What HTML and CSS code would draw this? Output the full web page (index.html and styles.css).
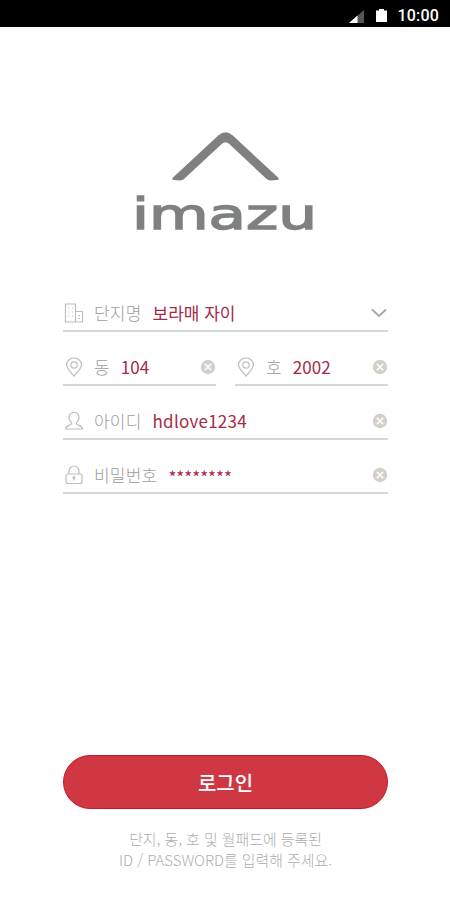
FILE: index.html
```html
<!DOCTYPE html>
<html lang="ko">
<head>
  <meta charset="UTF-8">
  <meta name="viewport" content="width=device-width, initial-scale=1.0">
  <title>imazu</title>
  <link rel="stylesheet" href="styles.css">
</head>
<body>
  <!-- shared icons -->
  <svg class="defs" width="0" height="0">
    <symbol id="icon-pin" viewBox="0 0 20 20">
      <path d="M10 19C7 15.5 2.500 11.500 2.500 7.800a7.500 6.800 0 0 1 15 0C17.500 11.500 13 15.500 10 19z"/>
      <circle cx="10" cy="8" r="3.200"/>
    </symbol>
    <symbol id="icon-clear" viewBox="0 0 16 16">
      <circle cx="8" cy="8" r="7.200" fill="#d3d0ca"/>
      <path d="M4.800 4.800l6.400 6.400M11.200 4.800l-6.400 6.400" fill="none" stroke="#fff" stroke-width="1.500"/>
    </symbol>
  </svg>

  <header class="status-bar">
    <svg class="signal" width="16" height="14" viewBox="0 0 16 14">
      <path d="M0 14L15 1v13z" fill="#555"/>
      <path d="M0 14L8.500 6.500V14z" fill="#fff"/>
    </svg>
    <svg class="battery" width="11" height="13" viewBox="0 0 11 13">
      <path d="M0 1.500h3V0h5v1.500h3V13H0z" fill="#fff"/>
    </svg>
    <span class="time">10:00</span>
  </header>

  <main class="login">
    <svg class="logo" width="182" height="102" viewBox="0 0 182 102">
      <path d="M38.500 48L45 48.500Q47.500 48.500 49.500 46.500L87 11.800Q90.500 8.500 94 11.800L131 46.500Q133 48.500 135.500 48.500L142.500 48Q144.500 47.500 143 45.500L97.500 3.200Q90.500-2.800 83.500 3.200L38 45.500Q36.500 47.500 38.500 48z" fill="#7f8180"/>
      <text class="logo-text" x="-3" y="97" textLength="185" lengthAdjust="spacingAndGlyphs">imazu</text>
    </svg>

    <form class="fields">
      <div class="field">
        <svg class="icon" viewBox="0 0 20 20">
          <path d="M1.500 19V1h10v18zM11.500 8.500h7V19h-7M4.500 5h1M8 5h1M4.500 9h1M8 9h1M4.500 13h1M8 13h1M14.500 12.500h1.500M14.500 15.500h1.500"/>
        </svg>
        <span class="label">단지명</span>
        <span class="value">보라매 자이</span>
        <svg class="arrow" width="16" height="10" viewBox="0 0 16 10"><path d="M1 1.500l7 6.500 7-6.500"/></svg>
      </div>

      <div class="field-row">
        <div class="field">
          <svg class="icon"><use href="#icon-pin"/></svg>
          <span class="label">동</span>
          <span class="value">104</span>
          <svg class="clear"><use href="#icon-clear"/></svg>
        </div>
        <div class="field">
          <svg class="icon"><use href="#icon-pin"/></svg>
          <span class="label">호</span>
          <span class="value">2002</span>
          <svg class="clear"><use href="#icon-clear"/></svg>
        </div>
      </div>

      <div class="field">
        <svg class="icon" viewBox="0 0 20 20">
          <path d="M7.500 11.500C3.500 8 4.500 1.500 10 1.500s6.500 6.500 2.500 10v1.500c1 1.500 5.500 1 6 5H1.500c.5-4 5-3.500 6-5z"/>
        </svg>
        <span class="label">아이디</span>
        <span class="value user-id">hdlove1234</span>
        <svg class="clear"><use href="#icon-clear"/></svg>
      </div>

      <div class="field">
        <svg class="icon" viewBox="0 0 20 20">
          <path d="M5 9V6a5 5 0 0 1 10 0v3M4 9h12q2 0 2 2v5.500q0 2-2 2H4q-2 0-2-2V11q0-2 2-2zM10 12.500v3"/>
          <circle cx="10" cy="12.500" r="1"/>
        </svg>
        <span class="label">비밀번호</span>
        <span class="value password">********</span>
        <svg class="clear"><use href="#icon-clear"/></svg>
      </div>
    </form>

    <button class="login-btn" type="button">로그인</button>
    <p class="notice">단지, 동, 호 및 월패드에 등록된<br>ID / PASSWORD를 입력해 주세요.</p>
  </main>
</body>
</html>
```
FILE: styles.css
```css
* {
  box-sizing: border-box;
}

body {
  margin: 0;
  height: 900px;
  display: flex;
  flex-direction: column;
  background: #fff;
  font-family: "Noto Sans CJK KR", "Noto Sans", sans-serif;
}

.defs {
  display: none;
}

.status-bar {
  height: 27px;
  flex-shrink: 0;
  display: flex;
  align-items: center;
  justify-content: flex-end;
  padding: 4px 11px 0 0;
  background: #000;
  color: #fff;
}

.battery {
  margin: 0 10px 0 11px;
}

.time {
  font-family: Roboto, sans-serif;
  font-size: 16px;
  font-weight: 500;
  line-height: 20px;
  letter-spacing: 0.2px;
}

.login {
  flex: 1;
  display: flex;
  flex-direction: column;
  padding: 105px 62px 0 63px;
}

.logo {
  align-self: center;
  overflow: visible;
}

.logo-text {
  font-family: "DejaVu Sans", sans-serif;
  font-size: 42px;
  fill: #7f8180;
  stroke: #7f8180;
  stroke-width: 1.4;
}

.fields {
  margin-top: 44px;
}

.field {
  height: 54px;
  flex: 1;
  display: flex;
  align-items: center;
  padding-top: 18px;
  border-bottom: 2px solid #d6d6d6;
  font-size: 17px;
  line-height: 24px;
  white-space: pre;
}

.field-row {
  display: flex;
  gap: 19px;
}

.icon {
  width: 20px;
  height: 20px;
  margin: 0 10px 0 1px;
  fill: none;
  stroke: #bdbdbd;
  stroke-width: 1.2;
}

.label {
  color: #9c9c9c;
  font-weight: 300;
  letter-spacing: 0.2px;
}

.value {
  margin-left: 11px;
  color: #a52a45;
}

.user-id {
  letter-spacing: 0.25px;
}

.password {
  padding-top: 4px;
}

.arrow,
.clear {
  margin-left: auto;
}

.arrow {
  margin-right: 1px;
  fill: none;
  stroke: #aaa;
  stroke-width: 2;
}

.clear {
  width: 16px;
  height: 16px;
}

.login-btn {
  height: 54px;
  margin-top: 261px;
  border: 1px solid #c51a28;
  border-radius: 27px;
  background: #cf3742;
  color: #fff;
  font-family: inherit;
  font-size: 20px;
  font-weight: 500;
}

.notice {
  margin: 19px 0 0;
  color: #adadad;
  font-size: 14.9px;
  font-weight: 300;
  line-height: 21px;
  text-align: center;
}
```
